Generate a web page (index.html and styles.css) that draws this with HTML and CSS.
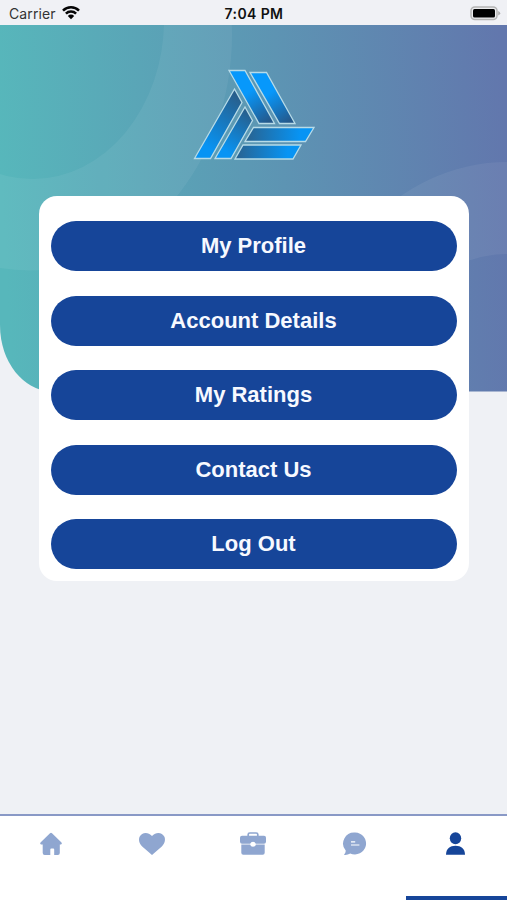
FILE: index.html
```html
<!DOCTYPE html>
<html lang="en">
<head>
<meta charset="utf-8">
<title>Account</title>
<link rel="stylesheet" href="styles.css">
</head>
<body>
<div class="screen">
  <header class="status">
    <div class="carrier">
      <span>Carrier</span>
      <svg width="18" height="14" viewBox="0 0 18 14">
        <path d="M1 4.600a11.300 11.300 0 0 1 16 0M3.900 7.600a7.200 7.200 0 0 1 10.200 0" fill="none" stroke="#050505" stroke-width="2.500"/>
        <path d="M5.800 9.900a4.600 4.600 0 0 1 6.400 0L9 13.200z" fill="#050505"/>
      </svg>
    </div>
    <time class="time">7:04 PM</time>
    <svg class="battery" width="31" height="15" viewBox="0 0 31 15">
      <rect x="1" y="1" width="26" height="12.5" rx="3.8" fill="#ececee" stroke="#b4b4b4" stroke-width="1.500"/>
      <rect x="3" y="3" width="22" height="8.500" rx="1.500" fill="#000"/>
      <path d="M28.200 5v4.600q2-.8 2-2.300t-2-2.300z" fill="#adadad"/>
    </svg>
  </header>
  <main class="content">
    <svg class="backdrop" width="507" height="367" viewBox="0 25 507 367">
      <defs>
        <linearGradient id="sky" gradientUnits="userSpaceOnUse" x1="0" y1="170" x2="507" y2="140">
          <stop offset="0" stop-color="#57b7bb"/>
          <stop offset=".48" stop-color="#5c99b4"/>
          <stop offset="1" stop-color="#6277ad"/>
        </linearGradient>
        <clipPath id="edge"><path d="M0 25H507V391.500H50C24 390 0 363 0 325z"/></clipPath>
      </defs>
      <g clip-path="url(#edge)">
        <rect y="25" width="507" height="367" fill="url(#sky)"/>
        <path fill="#fff" fill-opacity=".06" fill-rule="evenodd" d="M-174 35a203 235.500 0 1 0 406 0a203 235.500 0 1 0-406 0zM-99 20a131.500 159 0 1 0 263 0a131.500 159 0 1 0-263 0z"/>
        <path fill="#fff" fill-opacity=".06" fill-rule="evenodd" d="M304 392a203 230 0 1 1 406 0a203 230 0 1 1-406 0zM374 413a133 159 0 1 1 266 0a133 159 0 1 1-266 0z"/>
      </g>
    </svg>
    <svg class="logo" width="124" height="94" viewBox="0 0 124 94">
      <defs>
        <linearGradient id="down" x1=".2" y1="0" x2=".8" y2="1"><stop offset=".4" stop-color="#0798fb"/><stop offset="1" stop-color="#24598c"/></linearGradient>
        <linearGradient id="across"><stop offset="0" stop-color="#29628f"/><stop offset=".8" stop-color="#0794f4"/></linearGradient>
        <linearGradient id="up" x1=".7" y1="0" x2=".2" y2="1"><stop offset="0" stop-color="#285f8c"/><stop offset=".85" stop-color="#0794f4"/></linearGradient>
      </defs>
      <g stroke="#b7dbe8" stroke-width="1.300">
        <path fill="url(#down)" d="M37 3.500H53L82.500 56.500H67z"/>
        <path fill="url(#down)" d="M58 5.500H74.500L103 56.500H87.500z"/>
        <path fill="url(#up)" d="M42.500 22L50 35.500L18.500 91.500H2.500z"/>
        <path fill="url(#up)" d="M53 40L60.500 53.500L39 91.500H23z"/>
        <path fill="url(#across)" d="M61.500 60.500H122L113.500 74.500H53z"/>
        <path fill="url(#across)" d="M51 78H109L101 92H43z"/>
      </g>
    </svg>
    <nav class="menu">
      <a class="item">My Profile</a>
      <a class="item">Account Details</a>
      <a class="item">My Ratings</a>
      <a class="item">Contact Us</a>
      <a class="item">Log Out</a>
    </nav>
  </main>
  <footer class="tabs">
    <a class="tab"><svg width="28" height="26" viewBox="0 0 28 26"><path d="M13 2.200q1-1 2 0l9.500 9.300q1 1.600-.5 2h-1.200V22q0 2-2 2h-3.600v-5.600q0-1-1-1h-1.900q-1 0-1 1V24H7.700q-2 0-2-2v-8.500H4q-1.500-.4-.5-2z"/></svg></a>
    <a class="tab"><svg width="28" height="26" viewBox="0 0 28 26"><path d="M14 24L4.200 15.500C1 12.500.4 8.500 1.600 5.800C3.800 1.200 10 .5 14 5C18 .5 24.200 1.200 26.400 5.800C27.600 8.500 27 12.500 23.800 15.500z"/></svg></a>
    <a class="tab"><svg width="28" height="26" viewBox="0 0 28 26"><path d="M9.200 5V3.500q0-1.500 1.600-1.500h6.400q1.600 0 1.600 1.500V5" fill="none" stroke="currentColor" stroke-width="1.700"/><path d="M3 4.700H25q2 0 2 2v4q0 2-2 2h-8.200a3 3 0 0 0-5.600 0H3q-2 0-2-2v-4q0-2 2-2zM2.300 13.600h8.800a3 3 0 0 0 5.800 0h8.800v8.200q0 2-2 2H4.300q-2 0-2-2z"/></svg></a>
    <a class="tab"><svg width="28" height="26" viewBox="0 0 28 26"><path d="M14.200 1.500a11.200 11 0 1 1-5 21q-2.800 1.700-6.300 1.300q2-2 1.800-4.300a11.200 11 0 0 1 9.500-18z"/><path d="M10 10.800h4.200M10 14h8.400" stroke="#fff" stroke-width="1.200"/></svg></a>
    <a class="tab active"><svg width="28" height="26" viewBox="0 0 28 26"><ellipse cx="13.500" cy="7.300" rx="5.700" ry="6"/><path d="M4 23.800c0-6 4-9 9.500-9s9.500 3 9.500 9z"/></svg></a>
  </footer>
</div>
</body>
</html>
```
FILE: styles.css
```css
* { box-sizing: border-box; }

body {
  margin: 0;
  background: #eff1f5;
  font-family: "Liberation Sans", sans-serif;
}

.screen {
  width: 507px;
  height: 900px;
  display: flex;
  flex-direction: column;
  overflow: hidden;
}

.status {
  height: 25px;
  flex: none;
  display: grid;
  grid-template-columns: 1fr auto 1fr;
  align-items: center;
  padding: 2px 6px 0 9px;
  background: #f0f1f5;
  color: #111;
  font-family: Inter, sans-serif;
}

.carrier {
  display: flex;
  align-items: center;
  gap: 6px;
  font-size: 14px;
  letter-spacing: 0.1px;
  color: #333;
}

.carrier svg { margin-top: -1px; }

.time {
  margin-right: 2px;
  font-size: 14px;
  font-weight: 600;
  letter-spacing: 0.4px;
}

.battery { justify-self: end; }

.content {
  position: relative;
  flex: 1;
  display: flex;
  flex-direction: column;
  align-items: center;
}

.backdrop {
  position: absolute;
  top: 0;
  left: 0;
}

.logo {
  margin-top: 42px;
  z-index: 1;
}

.menu {
  z-index: 1;
  width: 430px;
  height: 385px;
  margin-top: 35px;
  padding: 25px 12px 12px;
  display: flex;
  flex-direction: column;
  justify-content: space-between;
  background: #fff;
  border-radius: 18px;
}

.item {
  height: 50px;
  display: flex;
  align-items: center;
  justify-content: center;
  background: #164599;
  border-radius: 25px;
  color: #f7f9ff;
  font-size: 22px;
  font-weight: 700;
}

.tabs {
  height: 86px;
  flex: none;
  display: grid;
  grid-template-columns: repeat(5, 1fr);
  background: #fff;
  border-top: 2px solid #8999c6;
}

.tab {
  display: flex;
  justify-content: center;
  padding: 15px 0 0;
  color: #8fa6d0;
  border-bottom: 4px solid transparent;
}

.tab svg { fill: currentColor; }

.active {
  color: #164599;
  border-bottom-color: #164599;
}
```
